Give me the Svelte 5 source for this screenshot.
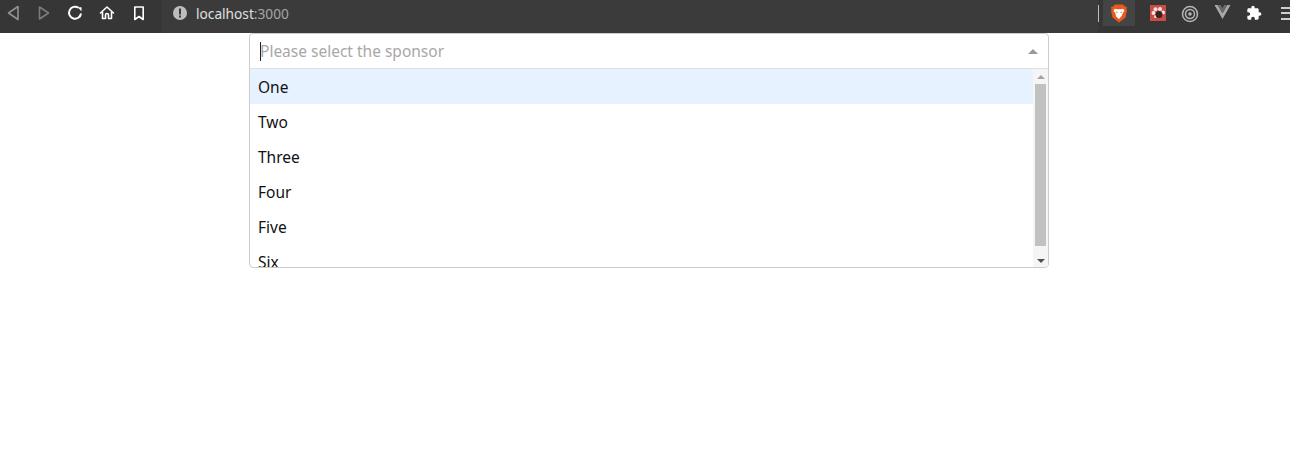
<script>
    const options = ['One', 'Two', 'Three', 'Four', 'Five', 'Six'];
    let active = 0;
</script>

<div class="page">
    <header class="toolbar">
        <div class="nav">
            <button class="tool" aria-label="Back">
                <svg width="14" height="16" viewBox="0 0 14 16"><path d="M12 1.500 2.500 8l9.500 6.500z" fill="none" stroke="#929292" stroke-width="1.600" stroke-linejoin="round"/></svg>
            </button>
            <button class="tool" aria-label="Forward">
                <svg width="14" height="16" viewBox="0 0 14 16"><path d="M2.500 2l9 6-9 6z" fill="none" stroke="#7c7c7c" stroke-width="1.600" stroke-linejoin="round"/></svg>
            </button>
            <button class="tool" aria-label="Reload">
                <svg width="16" height="16" viewBox="0 0 16 16"><path d="M11.500 2.800A6 6 0 1 0 14 8.500" fill="none" stroke="#fff" stroke-width="2"/><path d="M10.500 2.200h4v4z" fill="#fff"/></svg>
            </button>
            <button class="tool" aria-label="Home">
                <svg width="16" height="16" viewBox="0 0 16 16"><path d="M1.500 8 8 2l6.500 6M3.500 7v6.500h3V10a1.500 1.500 0 0 1 3 0v3.500h3V7" fill="none" stroke="#fff" stroke-width="1.600" stroke-linejoin="round" stroke-linecap="round"/></svg>
            </button>
            <button class="tool" aria-label="Bookmark">
                <svg width="14" height="16" viewBox="0 0 14 16"><path d="M2.800 2h8.400v12.500L7 11.500l-4.200 3z" fill="none" stroke="#fff" stroke-width="1.600" stroke-linejoin="round"/></svg>
            </button>
        </div>
        <div class="address">
            <svg class="info" width="16" height="16" viewBox="0 0 16 16"><circle cx="8" cy="8" r="7" fill="#bdbdbd"/><rect x="7" y="3.500" width="2" height="6" fill="#3a3a3a"/><rect x="7" y="10.500" width="2" height="2" fill="#3a3a3a"/></svg>
            <span class="host">localhost</span><span class="port">:3000</span>
        </div>
        <div class="extensions">
            <span class="divider"></span>
            <div class="brave">
                <svg width="18" height="19" viewBox="0 0 18 19"><path d="M5 .5h8l2 2 2 .5-.5 2 .5 1.500-1.500 7L9 18.500 2.500 13.500 1 6.500 1.500 5 1 3l2-.5z" fill="#e6591f"/><path d="M4.800 4.800l2.200.5h4l2.200-.5 1.300 2-2 2.700-.5 2L9 15l-3-2.500-.5-3-2-2.700z" fill="#fff"/><path d="M6 7.500l2 .8-1.500.7zM12 7.500l-2 .8 1.500.7z" fill="#e6591f"/></svg>
            </div>
            <div class="ext">
                <svg width="16" height="16" viewBox="0 0 16 16"><rect width="16" height="16" fill="#c94c47"/><circle cx="3.500" cy="8" r="2" fill="#f8e4e1"/><circle cx="5.500" cy="4.200" r="2" fill="#f8e4e1"/><circle cx="10" cy="4" r="2" fill="#f8e4e1"/><circle cx="13" cy="7.500" r="2" fill="#f8e4e1"/><circle cx="5.500" cy="11.500" r="1.500" fill="#f8e4e1"/><circle cx="9" cy="9.500" r="3.500" fill="#3b2222"/></svg>
            </div>
            <div class="ext rings">
                <svg width="18" height="18" viewBox="0 0 18 18"><circle cx="9" cy="9" r="7.500" fill="none" stroke="#b5b5b5" stroke-width="1.500"/><circle cx="9" cy="9" r="4.500" fill="none" stroke="#b5b5b5" stroke-width="1.500"/><circle cx="9" cy="9" r="1.800" fill="#b5b5b5"/></svg>
            </div>
            <div class="ext vee">
                <svg width="17" height="14" viewBox="0 0 16 14"><path d="M0 0h3.200L8 8.300 12.800 0H16L8 14z" fill="#a8a8a8"/><path d="M3.200 0h3L8 3.100 9.800 0h3L8 8.300z" fill="#6a6a6a"/></svg>
            </div>
            <div class="ext">
                <svg width="16" height="16" viewBox="0 0 24 24"><path d="M20.500 11H19V7c0-1.100-.9-2-2-2h-4V3.500C13 2.120 11.880 1 10.500 1S8 2.120 8 3.500V5H4c-1.100 0-1.990.9-1.990 2v3.800H3.500c1.490 0 2.700 1.210 2.700 2.700s-1.210 2.700-2.700 2.700H2V20c0 1.100.9 2 2 2h3.800v-1.500c0-1.490 1.210-2.700 2.700-2.700 1.490 0 2.700 1.210 2.700 2.700V22H17c1.100 0 2-.9 2-2v-4h1.500c1.380 0 2.500-1.120 2.500-2.500S21.880 11 20.500 11z" fill="#fff"/></svg>
            </div>
            <div class="menu" aria-hidden="true"><i></i><i></i><i></i></div>
        </div>
    </header>

    <main class="content">
        <div class="select">
            <div class="control">
                <div class="input">
                    <span class="caret"></span>
                    <span class="placeholder">Please select the sponsor</span>
                </div>
                <span class="arrow"></span>
            </div>
            <div class="dropdown">
                <ul class="list">
                    {#each options as option, i}
                        <li class:active={i === active}>{option}</li>
                    {/each}
                </ul>
                <div class="scrollbar">
                    <span class="step up"></span>
                    <span class="thumb"></span>
                    <span class="step down"></span>
                </div>
            </div>
        </div>
    </main>
</div>

<style>
    :global(body) {
        margin: 0;
        background: #fff;
    }

    .page {
        width: 1290px;
        height: 450px;
        overflow: hidden;
        font-family: "Noto Sans", "Open Sans", sans-serif;
    }

    .toolbar {
        display: flex;
        height: 33px;
        background: #363636;
    }

    .nav {
        display: flex;
        align-items: center;
        width: 162px;
        padding: 0 0 7px 5px;
        box-sizing: border-box;
    }

    .tool {
        all: unset;
        display: flex;
        justify-content: center;
        width: 16px;
        margin-right: 16px;
    }

    .address {
        display: flex;
        align-items: center;
        flex: 1;
        font-size: 13.7px;
        padding: 0 0 7px 10px;
        background: #3b3b3b;
    }

    .info {
        margin-right: 8px;
    }

    .host {
        color: #e0e0e0;
    }

    .port {
        color: #a5a5a5;
    }

    .extensions {
        display: flex;
        flex: none;
        align-items: center;
        width: 192px;
        padding-bottom: 7px;
        box-sizing: border-box;
        overflow: hidden;
    }

    .divider {
        flex: none;
        width: 1px;
        height: 17px;
        background: #bdbdbd;
        margin-right: 4px;
    }

    .brave {
        display: flex;
        flex: none;
        align-items: center;
        justify-content: center;
        width: 32px;
        height: 26px;
        background: #444;
        margin-right: 15px;
    }

    .ext {
        display: flex;
        flex: none;
        justify-content: center;
        width: 16px;
        margin-right: 16px;
    }

    .ext svg {
        flex: none;
    }

    .ext.rings {
        padding-top: 2px;
    }

    .ext.vee {
        padding-bottom: 2px;
    }

    .menu {
        display: flex;
        flex: none;
        flex-direction: column;
        gap: 3.500px;
        width: 12px;
        margin-left: 3px;
    }

    .menu i {
        display: block;
        height: 2px;
        background: #cfcfcf;
    }

    .content {
        display: flex;
        justify-content: center;
        padding-left: 8px;
    }

    .select {
        width: 800px;
        box-sizing: border-box;
        border: 1px solid #ccc;
        border-radius: 4px;
        overflow: hidden;
        background: #fff;
    }

    .control {
        display: flex;
        align-items: center;
        justify-content: space-between;
        height: 34px;
        border-bottom: 1px solid #e0e0e0;
    }

    .input {
        display: flex;
        align-items: center;
        padding-left: 10px;
        font-size: 15.500px;
    }

    .caret {
        width: 1px;
        height: 19px;
        margin-right: -1px;
        background: #222;
    }

    .placeholder {
        color: #a8a8a8;
    }

    .arrow {
        width: 0;
        height: 0;
        margin-right: 10px;
        border-left: 5px solid transparent;
        border-right: 5px solid transparent;
        border-bottom: 5px solid #999;
    }

    .dropdown {
        display: flex;
        height: 198px;
    }

    .list {
        flex: 1;
        margin: 0;
        padding: 0;
        list-style: none;
        overflow: hidden;
    }

    .list li {
        height: 35px;
        line-height: 37px;
        padding-left: 8px;
        font-size: 15.500px;
        color: #111;
    }

    .list li.active {
        background: #e6f2ff;
    }

    .scrollbar {
        display: flex;
        flex-direction: column;
        align-items: center;
        width: 15px;
        background: #f5f5f5;
    }

    .thumb {
        flex: 1;
        width: 11px;
        align-self: flex-start;
        margin-left: 2px;
        background: #c1c1c1;
    }

    .step {
        display: block;
        width: 0;
        height: 0;
        border-left: 4px solid transparent;
        border-right: 4px solid transparent;
    }

    .step.up {
        border-bottom: 4px solid #a3a3a3;
        margin: 6px 0 5px;
    }

    .step.down {
        border-top: 4px solid #505050;
        margin: 13px 0 4px;
    }
</style>
